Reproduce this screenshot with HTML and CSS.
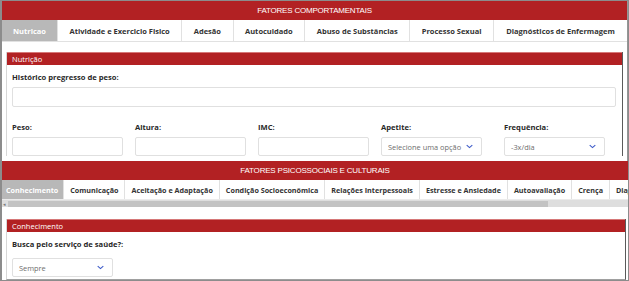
FILE: index.html
```html
<!DOCTYPE html>
<html lang="pt">
<head>
    <meta charset="UTF-8">
    <meta name="viewport" content="width=device-width,initial-scale=1" />
    <title>Fatores</title>
    <link rel="stylesheet" href="styles.css">
</head>
<body>
<div class="frame">
    <div class="group first">
        <div class="group-title">FATORES COMPORTAMENTAIS</div>
        <div class="tabs">
            <div class="tab active">Nutricao</div>
            <div class="tab">Atividade e Exercicio Fisico</div>
            <div class="tab">Adesão</div>
            <div class="tab">Autocuidado</div>
            <div class="tab">Abuso de Substâncias</div>
            <div class="tab">Processo Sexual</div>
            <div class="tab last">Diagnósticos de Enfermagem</div>
        </div>
        <div class="panel">
            <div class="panel-head">Nutrição</div>
            <div class="panel-body">
                <label class="lbl">Histórico pregresso de peso:</label>
                <div class="field wide"></div>
                <div class="row">
                    <div class="col">
                        <label class="lbl">Peso:</label>
                        <div class="field"></div>
                    </div>
                    <div class="col">
                        <label class="lbl">Altura:</label>
                        <div class="field"></div>
                    </div>
                    <div class="col">
                        <label class="lbl">IMC:</label>
                        <div class="field"></div>
                    </div>
                    <div class="col">
                        <label class="lbl">Apetite:</label>
                        <div class="field select apetite"><span class="ph">Selecione uma opção</span>
                            <svg class="chev" viewBox="0 0 10 6"><path d="M1 1l4 3.5L9 1" /></svg>
                        </div>
                    </div>
                    <div class="col">
                        <label class="lbl">Frequência:</label>
                        <div class="field select freq"><span class="ph">-3x/dia</span>
                            <svg class="chev" viewBox="0 0 10 6"><path d="M1 1l4 3.5L9 1" /></svg>
                        </div>
                    </div>
                </div>
            </div>
        </div>
    </div>
    <div class="group second">
        <div class="group-title">FATORES PSICOSSOCIAIS E CULTURAIS</div>
        <div class="tabs">
            <div class="tab active">Conhecimento</div>
            <div class="tab">Comunicação</div>
            <div class="tab">Aceitação e Adaptação</div>
            <div class="tab">Condição Socioeconômica</div>
            <div class="tab">Relações Interpessoais</div>
            <div class="tab">Estresse e Ansiedade</div>
            <div class="tab">Autoavaliação</div>
            <div class="tab">Crença</div>
            <div class="tab">Diagnósticos de Enfermagem</div>
        </div>
        <div class="scroll">
            <span class="arrow">&#9666;</span>
            <div class="thumb"></div>
        </div>
        <div class="panel">
            <div class="panel-head">Conhecimento</div>
            <div class="panel-body">
                <label class="lbl">Busca pelo serviço de saúde?:</label>
                <div class="field select sempre"><span class="ph">Sempre</span>
                    <svg class="chev" viewBox="0 0 10 6"><path d="M1 1l4 3.5L9 1" /></svg>
                </div>
            </div>
        </div>
    </div>
</div>
</body>
</html>
```

FILE: styles.css
```css
html, body{
    margin: 0;
    background-color: white;
}
.frame{
    width: 629px;
    height: 281px;
    box-sizing: border-box;
    border: 1px solid rgb(140,140,140);
    border-left-width: 2px;
    overflow: hidden;
    font-family: "Open Sans", "Noto Sans", sans-serif;
    color: rgb(51,51,51);
}
.group{
    overflow: hidden;
    background-color: white;
}
.group.first{
    height: 160px;
    border-right: 1px solid rgb(150,150,150);
}
.group-title{
    height: 19px;
    background-color: rgb(178,33,35);
    color: white;
    font-family: "Liberation Sans", Arial, sans-serif;
    font-size: 8px;
    line-height: 19px;
    text-align: center;
    letter-spacing: -0.2px;
}
.tabs{
    display: flex;
    border-bottom: 1px solid rgb(225,225,225);
    white-space: nowrap;
    overflow: hidden;
}
.first .tabs{
    height: 21px;
}
.second .tabs{
    height: 19px;
    border-bottom: 0;
}
.tab{
    font-size: 7.5px;
    font-weight: 700;
    display: flex;
    align-items: center;
    justify-content: center;
    border-right: 1px solid rgb(225,225,225);
    flex: none;
}
.first .tab{
    padding: 0 11.5px;
}
.first .tab.last{
    flex: 1;
    border-right: 0;
}
.second .tab{
    padding: 0 6px;
    font-size: 7.2px;
}
.tab.active{
    background-color: rgb(184,184,184);
    color: white;
}
.first .tab.active{
    padding: 0 11px;
}
.second .tab.active{
    padding: 0 5px 0 4px;
}
.panel{
    margin: 10px 4px 0 4px;
    border-left: 1px solid rgb(215,215,215);
    border-right: 1px solid rgb(90,90,90);
}
.second .panel{
    margin: 12px 2px 0 4px;
    border-bottom: 1px solid rgb(160,160,160);
    height: 60px;
}
.panel-head{
    height: 12px;
    background-color: rgb(178,33,35);
    border-top: 1px solid rgb(214,120,120);
    color: white;
    font-size: 7.5px;
    line-height: 12px;
    padding-left: 5px;
}
.panel-body{
    padding: 6px 5px 0 5px;
}
.lbl{
    display: block;
    font-size: 7.6px;
    font-weight: 700;
    line-height: 12px;
    color: rgb(40,40,40);
}
.field{
    height: 18px;
    border: 1px solid rgb(224,224,224);
    border-radius: 2px;
    box-sizing: border-box;
    margin-top: 5px;
}
.field.wide{
    height: 20px;
    margin-top: 4px;
    margin-right: 1px;
}
.row{
    display: flex;
    gap: 12px;
    margin-top: 14px;
}
.col{
    width: 111px;
    flex: none;
}
.col .field{
    height: 19px;
    margin-top: 4px;
}
.select{
    display: flex;
    align-items: center;
    justify-content: space-between;
    padding: 0 8px 0 6px;
}
.col .apetite, .col .freq{
    width: 101px;
}
.ph{
    font-size: 7.4px;
    color: rgb(110,110,110);
}
.chev{
    width: 7px;
    height: 5px;
    fill: none;
    stroke: rgb(60,90,200);
    stroke-width: 1.6;
}
.scroll{
    height: 7px;
    background-color: rgb(222,222,222);
    border-top: 1px solid rgb(235,235,235);
    display: flex;
    align-items: center;
}
.arrow{
    font-size: 5px;
    color: rgb(120,120,120);
    width: 5px;
    padding-left: 1px;
}
.thumb{
    width: 540px;
    height: 6px;
    background-color: rgb(195,195,195);
}
.second .panel-body{
    padding-top: 6px;
}
.sempre{
    width: 101px;
    height: 19px;
    margin-top: 8px;
}
```
